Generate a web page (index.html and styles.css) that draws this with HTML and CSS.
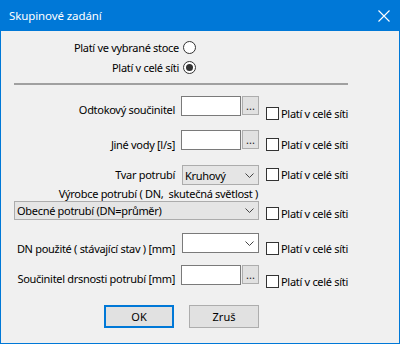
FILE: index.html
```html
<!DOCTYPE html>
<html lang="cs">
<head>
<meta charset="utf-8">
<title>Skupinové zadání</title>
<link rel="stylesheet" href="styles.css">
</head>
<body>
<div class="window">
  <header class="titlebar">
    <span class="title">Skupinové zadání</span>
    <svg class="close" width="12" height="12" viewBox="0 0 12 12"><path d="M0.5 0.5L11.5 11.5M11.5 0.5L0.5 11.5" stroke="#fff" stroke-width="1.1" fill="none"/></svg>
  </header>
  <main class="content">
    <div class="radios">
      <div class="radio-row"><span>Platí ve vybrané stoce</span><span class="radio"></span></div>
      <div class="radio-row"><span>Platí v celé síti</span><span class="radio on"></span></div>
    </div>
    <div class="sep"></div>

    <div class="row r1">
      <span class="lbl">Odtokový součinitel</span>
      <div class="ctrl"><span class="edit"></span><span class="dots">...</span></div>
      <div class="chk"><span class="box"></span><span>Platí v celé síti</span></div>
    </div>

    <div class="row r2">
      <span class="lbl">Jiné vody [l/s]</span>
      <div class="ctrl"><span class="edit"></span><span class="dots">...</span></div>
      <div class="chk"><span class="box"></span><span>Platí v celé síti</span></div>
    </div>

    <div class="row r3">
      <span class="lbl">Tvar potrubí</span>
      <div class="ctrl"><div class="combo"><span>Kruhový</span><svg class="chev" width="9" height="5" viewBox="0 0 9 5"><path d="M0.5 0.5L4.5 4.5L8.5 0.5" stroke="#444" fill="none"/></svg></div></div>
      <div class="chk"><span class="box"></span><span>Platí v celé síti</span></div>
    </div>

    <div class="caption">Výrobce potrubí ( DN,&nbsp; skutečná světlost )</div>

    <div class="row r5">
      <div class="combo wide"><span>Obecné potrubí (DN=průměr)</span><svg class="chev" width="9" height="5" viewBox="0 0 9 5"><path d="M0.5 0.5L4.5 4.5L8.5 0.5" stroke="#444" fill="none"/></svg></div>
      <div class="chk"><span class="box"></span><span>Platí v celé síti</span></div>
    </div>

    <div class="row r6">
      <span class="lbl">DN použité ( stávající stav ) [mm]</span>
      <div class="ctrl"><div class="combo white"><span></span><svg class="chev" width="9" height="5" viewBox="0 0 9 5"><path d="M0.5 0.5L4.5 4.5L8.5 0.5" stroke="#444" fill="none"/></svg></div></div>
      <div class="chk"><span class="box"></span><span>Platí v celé síti</span></div>
    </div>

    <div class="row r7">
      <span class="lbl">Součinitel drsnosti potrubí [mm]</span>
      <div class="ctrl"><span class="edit"></span><span class="dots">...</span></div>
      <div class="chk"><span class="box"></span><span>Platí v celé síti</span></div>
    </div>

    <div class="buttons">
      <button class="btn default">OK</button>
      <button class="btn">Zruš</button>
    </div>
  </main>
</div>
</body>
</html>
```

FILE: styles.css
```css
* { box-sizing: border-box; }

body {
  margin: 0;
  font-family: "Noto Sans", "DejaVu Sans", sans-serif;
  font-size: 11px;
  letter-spacing: -0.3px;
  color: #000;
  background: #f0f0f0;
}

.window {
  width: 400px;
  height: 344px;
  display: flex;
  flex-direction: column;
  background: #f0f0f0;
  border: 1px solid #0078d7;
  border-top: 0;
}

.titlebar {
  height: 31px;
  flex: none;
  background: #0078d7;
  color: #fff;
  display: flex;
  align-items: center;
  justify-content: space-between;
  padding: 0 9px 0 8px;
  font-size: 11.5px;
  letter-spacing: -0.1px;
}

.title { line-height: 16px; }

.close { display: block; }

.content {
  flex: 1;
  padding-left: 13px;
}

/* radio group */
.radios {
  width: 182px;
  margin-top: 6px;
  display: flex;
  flex-direction: column;
  align-items: flex-end;
}

.radio-row {
  height: 20px;
  display: flex;
  align-items: center;
  gap: 4px;
}

.radio {
  width: 13px;
  height: 13px;
  border: 1px solid #333;
  border-radius: 50%;
  background: #fff;
  display: flex;
  align-items: center;
  justify-content: center;
}

.radio.on::after {
  content: "";
  width: 7px;
  height: 7px;
  border-radius: 50%;
  background: #333;
}

.sep {
  width: 334px;
  height: 2px;
  background: #a0a0a0;
  margin-top: 6px;
}

/* form rows */
.row {
  display: flex;
  align-items: flex-start;
}

.lbl {
  width: 161px;
  margin-right: 6px;
  text-align: right;
  line-height: 16px;
  white-space: nowrap;
}

.ctrl {
  width: 78px;
  height: 20px;
  display: flex;
}

.edit {
  width: 60px;
  height: 20px;
  background: #fff;
  border: 1px solid #7a7a7a;
}

.dots {
  width: 17px;
  height: 19px;
  margin-left: 1px;
  background: #e1e1e1;
  border: 1px solid #adadad;
  text-align: center;
  line-height: 17px;
  font-size: 11px;
  letter-spacing: 0;
  color: #222;
}

.combo {
  width: 77px;
  height: 20px;
  margin-left: 1px;
  background: #e5e5e5;
  border: 1px solid #acacac;
  display: flex;
  align-items: center;
  justify-content: space-between;
  padding: 0 4px 0 2px;
  white-space: nowrap;
}

.combo.white {
  background: #fff;
  border-color: #7a7a7a;
}

.combo.wide {
  width: 245px;
  height: 19px;
  margin-left: 0;
}

.chev { display: block; flex: none; }

.chk {
  margin-left: 7px;
  height: 16px;
  display: flex;
  align-items: center;
  gap: 2px;
  white-space: nowrap;
}

.box {
  width: 13px;
  height: 13px;
  background: #fff;
  border: 1px solid #333;
}

.r1 { margin-top: 11px; height: 34px; }
.r1 .lbl { margin-top: 6px; }
.r1 .chk { margin-top: 9px; }

.r2 { height: 35px; }
.r2 .lbl { margin-top: 7px; }
.r2 .chk { margin-top: 6px; }

.r3 { height: 21px; }
.r3 .lbl { margin-top: 2px; }
.r3 .chk { margin-top: 1px; }

.caption {
  width: 245px;
  height: 15px;
  line-height: 16px;
  text-align: right;
  padding-right: 1px;
  white-space: nowrap;
}

.r5 { height: 32px; }
.r5 .chk { margin-top: 4px; }

.r6 { height: 32px; }
.r6 .lbl { margin-top: 8px; }
.r6 .chk { margin-top: 7px; }

.r7 { height: 40px; }
.r7 .lbl { margin-top: 6px; }
.r7 .chk { margin-top: 8px; }

/* buttons */
.buttons {
  display: flex;
  gap: 15px;
  padding-left: 90px;
}

.btn {
  width: 70px;
  height: 23px;
  font: inherit;
  color: #000;
  background: #e1e1e1;
  border: 1px solid #adadad;
  padding: 0;
  margin: 0;
}

.btn.default {
  border: 2px solid #0078d7;
}
```
